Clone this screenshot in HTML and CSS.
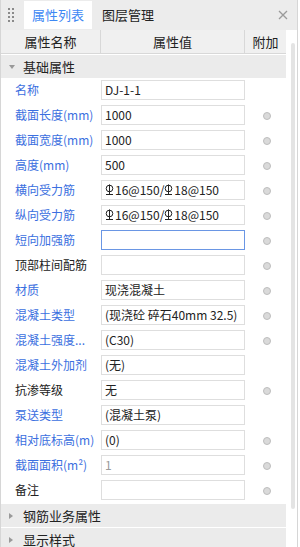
FILE: index.html
```html
<!DOCTYPE html>
<html>
<head>
<meta charset="utf-8">
<title>属性列表</title>
<link rel="stylesheet" href="styles.css">
</head>
<body>
<div class="panel">
	<div class="tabs">
		<div class="grip"><i></i><i></i><i></i><i></i><i></i><i></i><i></i><i></i></div>
		<div class="tab active">属性列表</div>
		<div class="tab">图层管理</div>
		<div class="close">
			<svg width="10" height="10" viewBox="0 0 10 10"><path d="M1 1L9 9M9 1L1 9" stroke="#9a9a9a" stroke-width="1.3"/></svg>
		</div>
	</div>
	<div class="main">
		<div class="grid">
			<div class="head">
				<div class="hc">属性名称</div>
				<div class="hc">属性值</div>
				<div class="hc">附加</div>
			</div>
			<div class="section open"><span class="arr"></span>基础属性</div>

			<div class="row"><div class="lbl blue">名称</div><div class="val">DJ-1-1</div><div class="add"></div></div>
			<div class="row"><div class="lbl blue">截面长度(mm)</div><div class="val">1000</div><div class="add"><span class="dot"></span></div></div>
			<div class="row"><div class="lbl blue">截面宽度(mm)</div><div class="val">1000</div><div class="add"><span class="dot"></span></div></div>
			<div class="row"><div class="lbl blue">高度(mm)</div><div class="val">500</div><div class="add"><span class="dot"></span></div></div>
			<div class="row"><div class="lbl blue">横向受力筋</div><div class="val"><svg class="bar" viewBox="0 0 9 11"><circle cx="4.5" cy="4.5" r="3.3" fill="none" stroke="#222"/><path d="M4.5 0.5V10.5M1 10.5H8" stroke="#222"/></svg>16@150/<svg class="bar" viewBox="0 0 9 11"><circle cx="4.5" cy="4.5" r="3.3" fill="none" stroke="#222"/><path d="M4.5 0.5V10.5M1 10.5H8" stroke="#222"/></svg>18@150</div><div class="add"><span class="dot"></span></div></div>
			<div class="row"><div class="lbl blue">纵向受力筋</div><div class="val"><svg class="bar" viewBox="0 0 9 11"><circle cx="4.5" cy="4.5" r="3.3" fill="none" stroke="#222"/><path d="M4.5 0.5V10.5M1 10.5H8" stroke="#222"/></svg>16@150/<svg class="bar" viewBox="0 0 9 11"><circle cx="4.5" cy="4.5" r="3.3" fill="none" stroke="#222"/><path d="M4.5 0.5V10.5M1 10.5H8" stroke="#222"/></svg>18@150</div><div class="add"><span class="dot"></span></div></div>
			<div class="row"><div class="lbl blue">短向加强筋</div><div class="val focus"></div><div class="add"><span class="dot"></span></div></div>
			<div class="row"><div class="lbl">顶部柱间配筋</div><div class="val"></div><div class="add"><span class="dot"></span></div></div>
			<div class="row"><div class="lbl blue">材质</div><div class="val">现浇混凝土</div><div class="add"><span class="dot"></span></div></div>
			<div class="row"><div class="lbl blue">混凝土类型</div><div class="val">(现浇砼 碎石40mm 32.5)</div><div class="add"><span class="dot"></span></div></div>
			<div class="row"><div class="lbl blue">混凝土强度...</div><div class="val">(C30)</div><div class="add"><span class="dot"></span></div></div>
			<div class="row"><div class="lbl blue">混凝土外加剂</div><div class="val">(无)</div><div class="add"></div></div>
			<div class="row"><div class="lbl">抗渗等级</div><div class="val">无</div><div class="add"><span class="dot"></span></div></div>
			<div class="row"><div class="lbl blue">泵送类型</div><div class="val">(混凝土泵)</div><div class="add"></div></div>
			<div class="row"><div class="lbl blue">相对底标高(m)</div><div class="val">(0)</div><div class="add"><span class="dot"></span></div></div>
			<div class="row"><div class="lbl blue">截面面积(m²)</div><div class="val dim">1</div><div class="add"><span class="dot"></span></div></div>
			<div class="row"><div class="lbl">备注</div><div class="val"></div><div class="add"><span class="dot"></span></div></div>

			<div class="section"><span class="arr"></span>钢筋业务属性</div>
			<div class="section"><span class="arr"></span>显示样式</div>
		</div>
		<div class="scroll"><div class="thumb"></div></div>
	</div>
</div>
</body>
</html>
```
FILE: styles.css
```css
body {margin: 0; font: 12px/1.2 "Noto Sans CJK SC", "Microsoft YaHei", sans-serif; color: #222; background: #fff;}
.panel {width: 296px; height: 547px; overflow: hidden; border-left: 1px solid #d6d6d6; border-right: 1px solid #d6d6d6; background: #fff;}

.tabs {display: flex; height: 30px; background: #ececec; font-size: 13px;}
.grip {width: 23px; display: grid; grid-template-columns: 2px 2px; grid-auto-rows: 2px; column-gap: 2px; row-gap: 2px; align-content: center; padding-left: 7px; box-sizing: border-box;}
.grip i {background: #8a8a8a; width: 2px; height: 2px;}
.tab {display: flex; align-items: center; justify-content: center; padding: 0 10px; margin-top: 1px; margin-bottom: 1px;}
.tab.active {width: 68px; padding: 0; background: #fff; color: #3d88f4;}
.close {margin-left: auto; width: 26px; display: flex; align-items: center; justify-content: center; padding-right: 1px;}

.main {display: flex;}
.grid {width: 285px;}
.scroll {width: 11px; padding-top: 13px; display: flex; justify-content: center;}
.thumb {width: 4px; height: 466px; background: #e4e4e4; border-radius: 2px; margin-left: 2px;}

.head {display: grid; grid-template-columns: 100px 144px 41px; height: 23px; background: #f0f0f0; border-bottom: 1px solid #d8d8d8; font-size: 13px;}
.hc {display: flex; align-items: center; justify-content: center; border-right: 1px solid #d8d8d8;}
.hc:last-child {border-right: 0;}

.section {height: 23px; margin-top: 1px; background: #ebebeb; display: flex; align-items: center; padding-left: 8px; font-size: 13px;}
.arr {width: 0; height: 0; border-top: 3px solid transparent; border-bottom: 3px solid transparent; border-left: 4px solid #999; margin-right: 10px;}
.section.open .arr {border-left: 3px solid transparent; border-right: 3px solid transparent; border-top: 4px solid #999; border-bottom: 0; margin-right: 8px;}

.row {display: grid; grid-template-columns: 100px 144px 41px; height: 25px; align-items: start;}
.row:first-of-type {margin-top: 1px;}
.lbl {padding-left: 14px; height: 25px; display: flex; align-items: center; font-size: 12px; white-space: nowrap; padding-bottom: 1px; box-sizing: border-box;}
.lbl.blue {color: #3b6fe0;}
.val {margin-top: 2px; height: 20px; box-sizing: border-box; border: 1px solid #dedede; padding: 0 3px; display: flex; align-items: center; white-space: nowrap; overflow: hidden; color: #222;}
.val.focus {border-color: #6a96e4;}
.val.dim {color: #9a9a9a;}
.bar {width: 9px; height: 11px; margin: 0 1px 1px 0;}
.add {height: 25px; display: flex; align-items: center; justify-content: center; padding-left: 2px;}
.dot {width: 8px; height: 8px; border-radius: 50%; background: #dadada; border: 1px solid #bdbdbd; box-sizing: border-box;}
```
